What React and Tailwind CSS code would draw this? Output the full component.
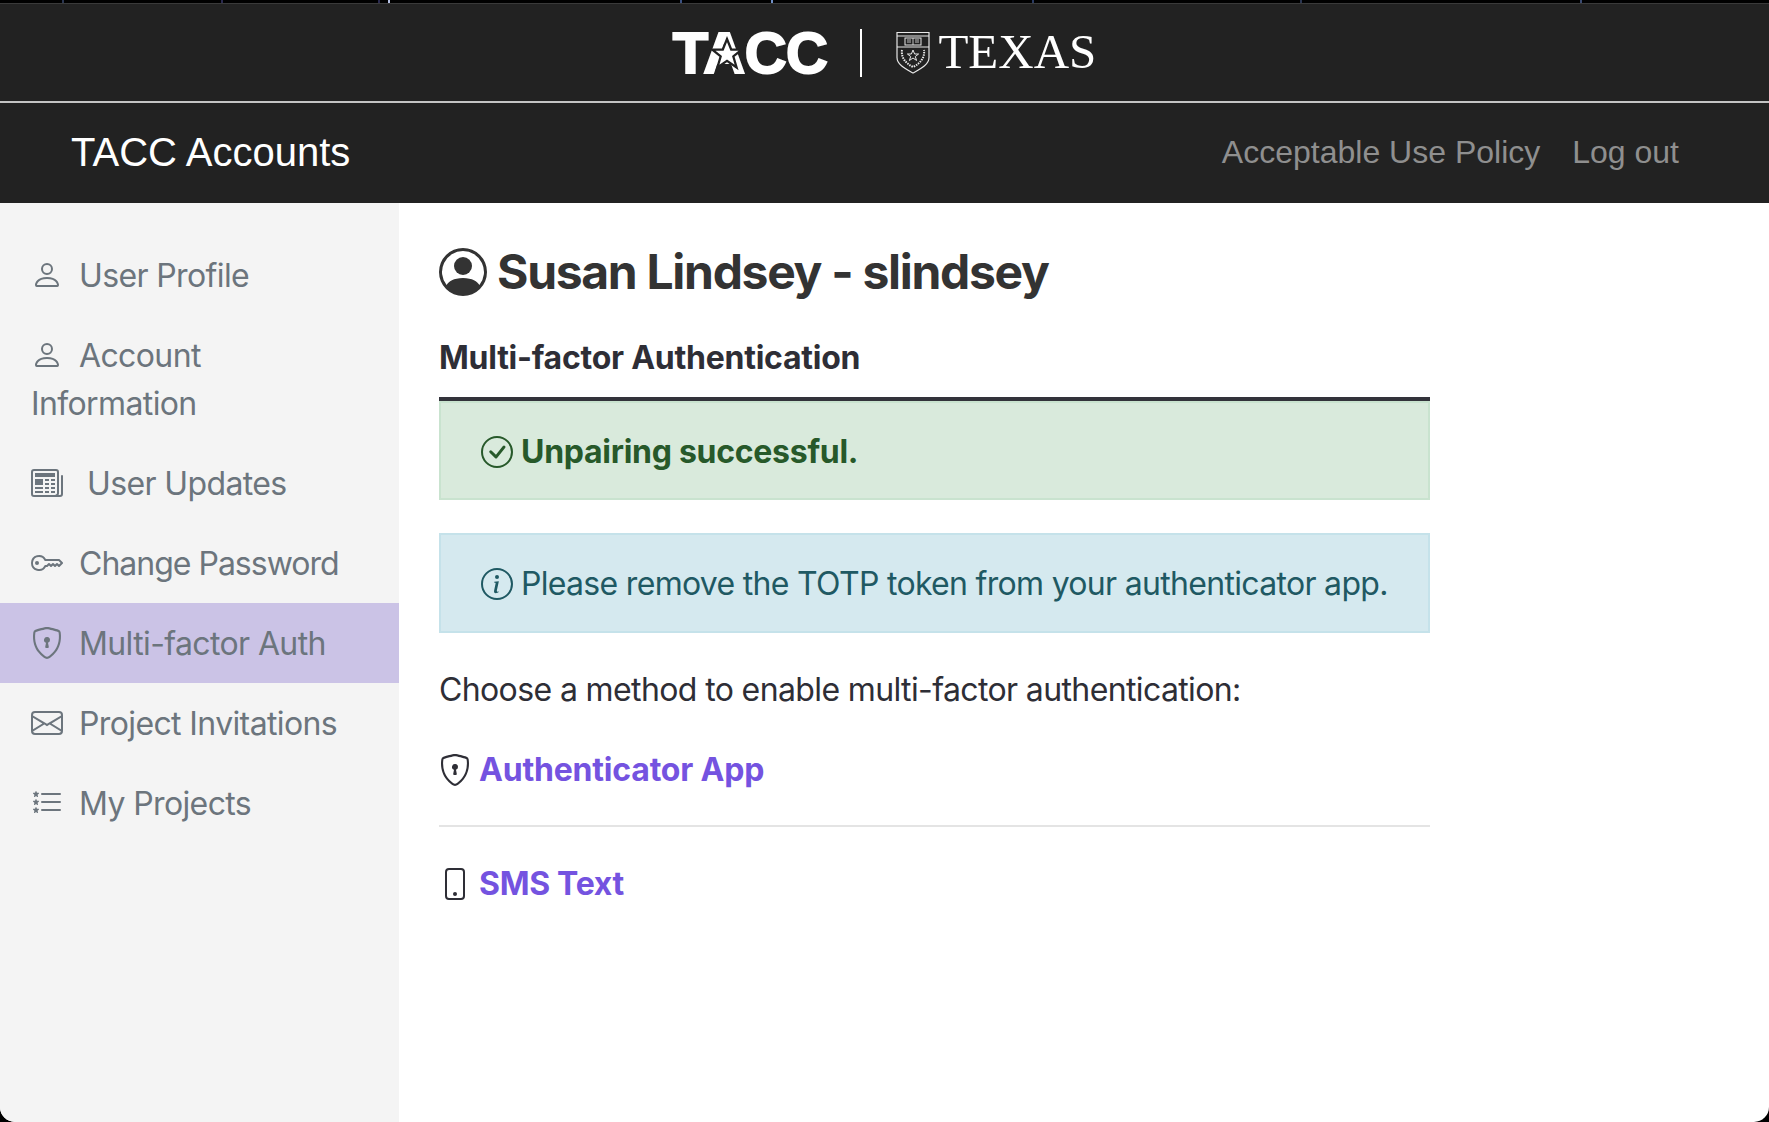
import React from 'react';
import {
    BsCheckCircle,
    BsEnvelope,
    BsInfoCircle,
    BsKey,
    BsListStars,
    BsNewspaper,
    BsPerson,
    BsPersonCircle,
    BsPhone,
    BsShieldLock,
} from 'react-icons/bs';

const navItems = [
    { label: "User Profile", icon: BsPerson },
    { label: "Account Information", icon: BsPerson },
    { label: "User Updates", icon: BsNewspaper, wide: true },
    { label: "Change Password", icon: BsKey, tight: true },
    { label: "Multi-factor Auth", icon: BsShieldLock, active: true },
    { label: "Project Invitations", icon: BsEnvelope },
    { label: "My Projects", icon: BsListStars },
];

const specks = [
    { x: 62, c: "#2a3550" },
    { x: 221, c: "#2a2a50" },
    { x: 378, c: "#2a2a50" },
    { x: 388, c: "#b8c4e8" },
    { x: 680, c: "#3a5080" },
    { x: 771, c: "#7090c8" },
    { x: 1032, c: "#2a3a60" },
    { x: 1300, c: "#2a3550" },
    { x: 1580, c: "#3a4a70" },
];

const UtShield = () => (
    <svg viewBox="0 0 34 43" className="w-[34px] h-[43px] shrink-0" fill="none" stroke="#e8e8e8">
        <path d="M1 1.5h32v25c0 7-8 11-16 15.5C9 37.5 1 33.500 1 26.500z" strokeWidth="1.2" />
        <path d="M1 5h32M1 16h32" strokeWidth="1" />
        <rect x="9" y="7" width="16" height="7" strokeWidth="1" />
        <path d="M17 7v7M11 9h4M11 11h4M19 9h4M19 11h4" strokeWidth="0.8" />
        <path d="M17 19l1.600 4h4l-3.300 2.500 1.300 4-3.600-2.500-3.600 2.500 1.300-4-3.300-2.500h4z" strokeWidth="1" />
        <path d="M6 19c-1 7 3 13 11 17 8-4 12-10 11-17" strokeWidth="2" strokeDasharray="1.500 1" />
    </svg>
);

const App = () => {
    return (
        <div className="relative h-screen bg-black overflow-hidden font-['Inter',sans-serif]">
            {specks.map(s => (
                <span key={s.x} className="absolute top-0 w-[2px] h-[3px]" style={{ left: s.x, backgroundColor: s.c }} />
            ))}

            <div className="pt-[3px] h-full">
                <div className="flex flex-col h-full rounded-b-[15px] overflow-hidden bg-white">
                    {/* Brand bar */}
                    <div className="h-[100px] shrink-0 flex items-center justify-center bg-[#222222] border-t border-[#3a3a3a] border-b-2 border-b-[#c4c4c4]">
                        <div className="relative flex items-center text-white">
                            <span className="font-['Liberation_Sans',sans-serif] font-bold text-[58px] leading-none tracking-[-0.5px] [-webkit-text-stroke:2px_white]">TACC</span>
                            <svg viewBox="0 0 24 24" className="absolute left-[36px] top-[12px] w-[36px] h-[36px]">
                                <path d="M12 2l2.800 7h7.200l-5.800 4.600 2.200 7.400-6.400-4.400-6.400 4.400 2.200-7.400L2 9h7.200z" fill="white" stroke="#222222" strokeWidth="1.500" />
                            </svg>
                            <div className="w-[2px] h-[48px] bg-white ml-[33px] mr-[34px]" />
                            <UtShield />
                            <span className="ml-[8px] mb-[2px] font-['Liberation_Serif',serif] text-[49px] leading-none">TEXAS</span>
                        </div>
                    </div>

                    {/* Navbar */}
                    <div className="h-[100px] shrink-0 flex items-center justify-between pl-[71px] pr-[90px] pb-[2px] bg-[#222222] font-['Liberation_Sans',sans-serif]">
                        <a className="text-white text-[40px] leading-none">TACC Accounts</a>
                        <div className="flex items-center gap-[32px] text-[#8f8f8f] text-[32px] leading-none">
                            <a>Acceptable Use Policy</a>
                            <a>Log out</a>
                        </div>
                    </div>

                    <div className="flex flex-1 min-h-0">
                        {/* Sidebar */}
                        <nav className="w-[399px] shrink-0 pt-[32px] bg-[#f4f4f4]">
                            {navItems.map(item => {
                                const Icon = item.icon;
                                return (
                                    <a
                                        key={item.label}
                                        className={`block pl-[31px] pr-[40px] pt-[17px] pb-[15px] text-[32px] leading-[48px] text-[#6c757d] ${item.tight ? 'tracking-[-1px]' : 'tracking-[-0.62px]'} ${item.active ? 'bg-[#cbc3e6]' : ''}`}
                                    >
                                        <Icon className={`inline-block w-[32px] h-[32px] align-[-4px] ${item.wide ? 'mr-[24px]' : 'mr-[16px]'}`} />
                                        {item.label}
                                    </a>
                                );
                            })}
                        </nav>

                        {/* Main */}
                        <main className="flex-1 pl-[40px] pt-[45px]">
                            <h1 className="flex items-center gap-[10px] h-[48px] text-[48px] leading-none font-bold tracking-[-1.3px] text-[#333333]">
                                <BsPersonCircle className="w-[48px] h-[48px]" />
                                Susan Lindsey - slindsey
                            </h1>

                            <div className="w-[991px]">
                                <h2 className="mt-[38px] text-[32px] leading-[48px] font-bold tracking-[-0.25px] text-[#2e2e36]">Multi-factor Authentication</h2>
                                <div className="mt-[15px] border-t-4 border-[#33333b]" />

                                <div className="flex items-center h-[99px] pl-[40px] pt-[2px] border-2 border-[#c9e3cf] bg-[#d9eadc] text-[#27592a] text-[32px] font-bold tracking-[-0.28px]">
                                    <BsCheckCircle className="w-[32px] h-[32px] mr-[8px]" />
                                    Unpairing successful.
                                </div>

                                <div className="mt-[33px] flex items-center h-[100px] pl-[40px] pt-[1px] border-2 border-[#c5e2ea] bg-[#d5e9ef] text-[#1f5963] text-[32px] tracking-[-0.69px]">
                                    <BsInfoCircle className="w-[32px] h-[32px] mr-[8px]" />
                                    Please remove the TOTP token from your authenticator app.
                                </div>

                                <p className="mt-[33px] text-[32px] leading-[48px] tracking-[-0.62px] text-[#2e2e36]">Choose a method to enable multi-factor authentication:</p>

                                <a className="mt-[32px] flex items-center text-[32px] leading-[48px] font-bold tracking-[-0.2px] text-[#7453e0]">
                                    <BsShieldLock className="w-[32px] h-[32px] mr-[8px] text-[#2e2e36]" />
                                    Authenticator App
                                </a>

                                <hr className="mt-[31px] border-t-2 border-[#e4e4e4]" />

                                <a className="mt-[33px] flex items-center text-[32px] leading-[48px] font-bold tracking-[-0.3px] text-[#7453e0]">
                                    <BsPhone className="w-[32px] h-[32px] mr-[8px] text-[#2e2e36]" />
                                    SMS Text
                                </a>
                            </div>
                        </main>
                    </div>
                </div>
            </div>
        </div>
    );
};

export default App;
